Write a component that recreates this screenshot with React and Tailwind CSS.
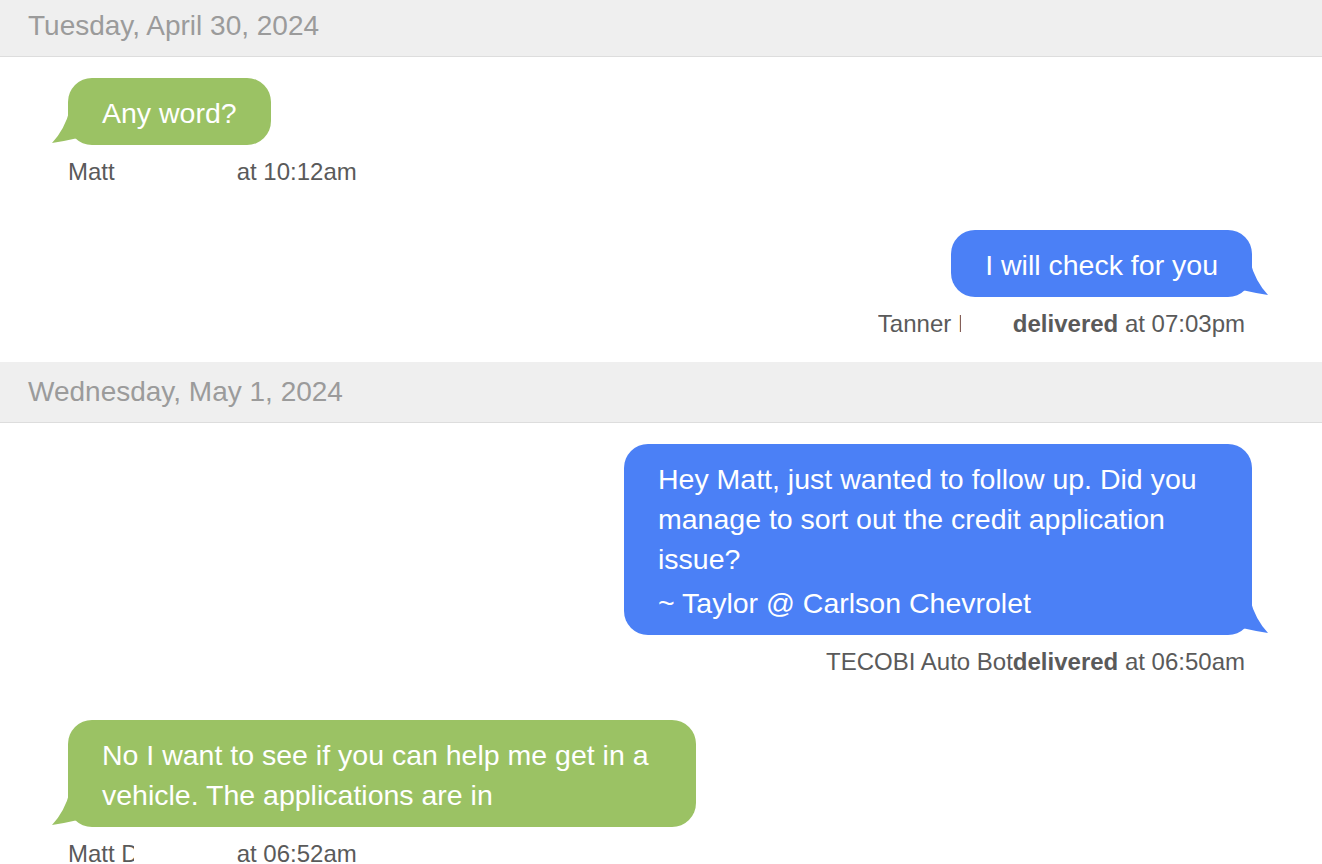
import React from 'react';

function DateHeader({ children, className = '' }) {
  return (
    <div className={`h-[61px] flex items-center pl-[28px] bg-[#efefef] border-b border-[#dddddd] text-[28px] text-[#9b9b9b] ${className}`}>
      {children}
    </div>
  );
}

function Tail({ color, flip }) {
  return (
    <svg
      width="30"
      height="40"
      viewBox="0 0 30 40"
      className={`absolute bottom-0 ${flip ? 'right-[-16px] -scale-x-100' : 'left-[-16px]'}`}
    >
      <path d="M18 4 Q13 24 0 38 Q13 36 26 33 L30 30 L30 4 Z" fill={color} />
    </svg>
  );
}

function Bubble({ side, children }) {
  const incoming = side === 'left';
  const color = incoming ? '#9bc264' : '#4b80f6';
  return (
    <div
      className={`relative max-w-[628px] rounded-[24px] px-[34px] pt-[15px] pb-[12px] text-[28.5px] leading-[40px] text-white ${
        incoming ? 'self-start bg-[#9bc264]' : 'self-end bg-[#4b80f6]'
      }`}
    >
      <Tail color={color} flip={!incoming} />
      <div className="relative">{children}</div>
    </div>
  );
}

function Meta({ side, name, nameWidth, gap, status, time }) {
  return (
    <div
      className={`mt-[13px] text-[24px] leading-[28px] text-[#5a5a5a] whitespace-nowrap ${
        side === 'left' ? 'self-start' : 'self-end pr-[7px]'
      }`}
    >
      <span className="inline-block overflow-hidden align-bottom" style={{ width: nameWidth }}>
        {name}
      </span>
      <span className="inline-block" style={{ width: gap }} />
      {status && <span className="font-bold">{status}</span>} at {time}
    </div>
  );
}

export default function App() {
  return (
    <div className="h-[864px] overflow-hidden bg-white font-['Liberation_Sans',Arial,sans-serif]">
      <DateHeader className="-mt-[4px]">Tuesday, April 30, 2024</DateHeader>

      <div className="flex flex-col pl-[68px] pr-[70px] pt-[21px] pb-[24px]">
        <Bubble side="left">Any word?</Bubble>
        <Meta side="left" name="Matt" nameWidth="162px" gap="0px" time="10:12am" />

        <div className="h-[44px]" />

        <Bubble side="right">I will check for you</Bubble>
        <Meta side="right" name="Tanner Dawson" nameWidth="83px" gap="52px" status="delivered" time="07:03pm" />
      </div>

      <DateHeader>Wednesday, May 1, 2024</DateHeader>

      <div className="flex flex-col pl-[68px] pr-[70px] pt-[21px] pb-[24px]">
        <Bubble side="right">
          <p>Hey Matt, just wanted to follow up. Did you manage to sort out the credit application issue?</p>
          <p className="mt-[4px]">~ Taylor @ Carlson Chevrolet</p>
        </Bubble>
        <Meta side="right" name="TECOBI Auto Bot" gap="0px" status="delivered" time="06:50am" />

        <div className="h-[44px]" />

        <Bubble side="left">No I want to see if you can help me get in a vehicle. The applications are in</Bubble>
        <Meta side="left" name="Matt Davis" nameWidth="66px" gap="96px" time="06:52am" />
      </div>
    </div>
  );
}
